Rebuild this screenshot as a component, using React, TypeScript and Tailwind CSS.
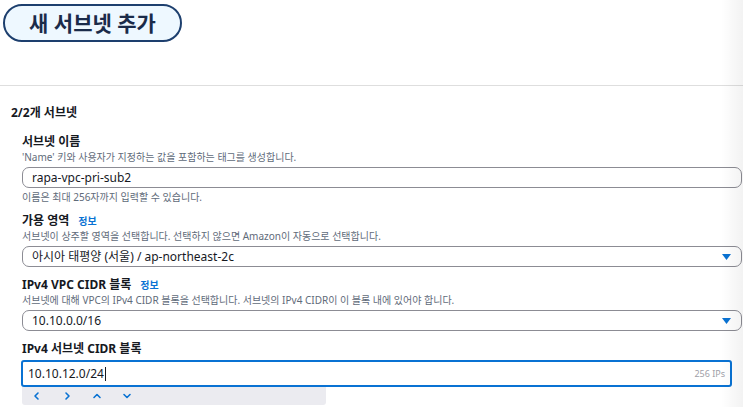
import React from "react";

const Caret = () => (
  <svg width="9" height="6" viewBox="0 0 9 6" className="shrink-0">
    <path d="M0 0 H9 L4.5 6 Z" fill="#0972d3" />
  </svg>
);

const Chev = ({ d }: { d: string }) => (
  <svg width="10" height="10" viewBox="0 0 10 10">
    <path d={d} fill="none" stroke="#0972d3" strokeWidth="1.6" strokeLinecap="round" strokeLinejoin="round" />
  </svg>
);

export default function App() {
  return (
    <div className="relative w-[743px] h-[407px] overflow-hidden bg-white font-['Noto_Sans','Noto_Sans_CJK_KR',sans-serif] text-[#16191f]">
      <div className="pt-[4px] pl-[3px]">
        <div className="flex h-[38px] w-[179px] items-center justify-center rounded-full border-2 border-[#1d3f6e] bg-[#eef8ff] text-[21px] font-bold leading-none text-[#1a2b4a]">
          새 서브넷 추가
        </div>
      </div>
      <div className="mt-[43px] h-px bg-[#dedede]" />

      <div className="pl-[11px]">
        <div className="mt-[19px] h-[16px] text-[12px] font-bold leading-[16px]">2/2개 서브넷</div>
      </div>

      <div className="pl-[22px]">
        <div className="mt-[13px] h-[16px] text-[12px] font-bold leading-[16px]">서브넷 이름</div>
        <div className="h-[14px] text-[10px] leading-[14px] text-[#5f6b7a]">'Name' 키와 사용자가 지정하는 값을 포함하는 태그를 생성합니다.</div>
        <div className="mt-[3px] flex h-[21px] w-[720px] items-center rounded-[7px] border border-[#8c8c94] pl-[9px] text-[12px]">
          rapa-vpc-pri-sub2
        </div>
        <div className="mt-[2px] h-[14px] text-[10px] leading-[14px] text-[#5f6b7a]">이름은 최대 256자까지 입력할 수 있습니다.</div>

        <div className="mt-[9px] flex h-[16px] items-center gap-[9px] leading-[16px]">
          <span className="text-[12px] font-bold">가용 영역</span>
          <span className="text-[10px] font-bold text-[#0972d3]">정보</span>
        </div>
        <div className="h-[14px] text-[10px] leading-[14px] text-[#5f6b7a]">서브넷이 상주할 영역을 선택합니다. 선택하지 않으면 Amazon이 자동으로 선택합니다.</div>
        <div className="mt-[3px] flex h-[21px] w-[720px] items-center justify-between rounded-[7px] border border-[#8c8c94] pl-[9px] pr-[10px] text-[12px]">
          <span>아시아 태평양 (서울) / ap-northeast-2c</span>
          <Caret />
        </div>

        <div className="mt-[10px] flex h-[16px] items-center gap-[9px] leading-[16px]">
          <span className="text-[12px] font-bold">IPv4 VPC CIDR 블록</span>
          <span className="text-[10px] font-bold text-[#0972d3]">정보</span>
        </div>
        <div className="h-[14px] text-[10px] leading-[14px] text-[#5f6b7a]">서브넷에 대해 VPC의 IPv4 CIDR 블록을 선택합니다. 서브넷의 IPv4 CIDR이 이 블록 내에 있어야 합니다.</div>
        <div className="mt-[3px] flex h-[21px] w-[720px] items-center justify-between rounded-[7px] border border-[#8c8c94] pl-[9px] pr-[10px] text-[12px]">
          <span>10.10.0.0/16</span>
          <Caret />
        </div>

        <div className="mt-[10px] h-[16px] text-[12px] font-bold leading-[16px]">IPv4 서브넷 CIDR 블록</div>
        <div className="-ml-px mt-[3px] flex h-[27px] w-[711px] items-center justify-between rounded-[3px] border-2 border-[#0972d3] pl-[5px] pr-[5px]">
          <span className="flex items-center text-[12px]">
            10.10.12.0/24
            <span className="ml-px inline-block h-[14px] w-px bg-[#16191f]" />
          </span>
          <span className="text-[9px] text-[#a0a0a8]">256 IPs</span>
        </div>
        <div className="flex h-[18px] w-[304px] items-center gap-[20px] rounded-b-[3px] bg-[#ebebf0] pl-[10px]">
          <Chev d="M6 2 L3 5 L6 8" />
          <Chev d="M4 2 L7 5 L4 8" />
          <Chev d="M2 6.5 L5 3.5 L8 6.5" />
          <Chev d="M2 3.5 L5 6.5 L8 3.5" />
        </div>
      </div>

      <div className="pointer-events-none absolute right-0 top-0 h-full w-[22px] bg-gradient-to-r from-transparent to-[#000000]/[0.05]" />
    </div>
  );
}
